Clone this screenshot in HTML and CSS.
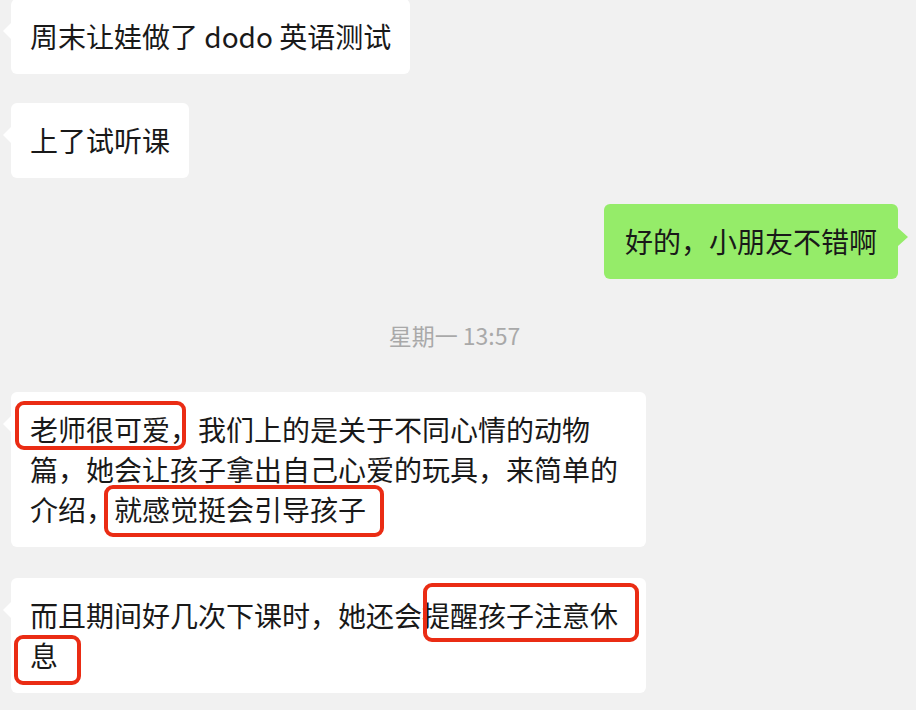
FILE: index.html
```html
<!DOCTYPE html>
<html lang="zh-CN">
<head>
    <meta charset="UTF-8">
    <meta name="viewport" content="width=device-width, initial-scale=1.0">
    <title>聊天记录</title>
    <link rel="stylesheet" href="styles.css">
</head>
<body>

<div class="chat">
    <div class="msg msg-in first">
        <div class="bubble">周末让娃做了 dodo 英语测试</div>
    </div>

    <div class="msg msg-in">
        <div class="bubble">上了试听课</div>
    </div>

    <div class="msg msg-out">
        <div class="bubble">好的，小朋友不错啊</div>
    </div>

    <div class="time">星期一 13:57</div>

    <div class="msg msg-in">
        <div class="bubble"><span class="mark mark-a">老师很可爱，</span>我们上的是关于不同心情的动物篇，她会让孩子拿出自己心爱的玩具，来简单的介绍，<span class="mark mark-b">就感觉挺会引导孩子</span></div>
    </div>

    <div class="msg msg-in last">
        <div class="bubble">而且期间好几次下课时，她还会<span class="mark mark-c">提醒孩子注意休</span><span class="mark mark-d">息</span></div>
    </div>
</div>

</body>
</html>
```

FILE: styles.css
```css
body {
    margin: 0;
    padding: 0;
    background-color: #f1f1f1;
    font-family: "Noto Sans CJK SC", "Noto Sans", sans-serif;
    color: #191919;
}

.chat {
    display: flex;
    flex-direction: column;
    padding: 0 18px 0 11px;
}

.msg {
    display: flex;
    margin-top: 29px;
}

.msg.first {
    margin-top: -1px;
}

.msg.last {
    margin-top: 31px;
}

.msg-in {
    justify-content: flex-start;
}

.msg-out {
    justify-content: flex-end;
    margin-top: 26px;
}

.bubble {
    position: relative;
    box-sizing: border-box;
    max-width: 635px;
    padding: 17px 19px 18px;
    font-size: 28px;
    line-height: 40px;
    background-color: #ffffff;
    border-radius: 6px;
}

.msg-in .bubble::before {
    content: "";
    position: absolute;
    left: -8px;
    top: 24px;
    border-top: 8px solid transparent;
    border-bottom: 8px solid transparent;
    border-right: 8px solid #ffffff;
}

.msg-out .bubble {
    padding: 17px 21px 18px;
    background-color: #95ec69;
}

.msg-out .bubble::after {
    content: "";
    position: absolute;
    right: -10px;
    top: 24px;
    border-top: 9px solid transparent;
    border-bottom: 9px solid transparent;
    border-left: 10px solid #95ec69;
}

.time {
    margin: 40px 0 12px;
    text-align: center;
    font-size: 23px;
    line-height: 32px;
    color: #a9a9a9;
}

/* red annotation boxes drawn over the text */
.mark {
    position: relative;
}

.mark::after {
    content: "";
    position: absolute;
    border: 4px solid #ea2c14;
    border-radius: 9px;
}

.mark-a::after {
    top: -8px;
    bottom: -1px;
    left: -15px;
    right: 12px;
}

.mark-b::after {
    top: -4px;
    bottom: -8px;
    left: -10px;
    right: -18px;
}

.mark-c::after {
    top: -12px;
    bottom: -7px;
    left: 1px;
    right: -21px;
}

.mark-d::after {
    top: 0;
    bottom: -10px;
    left: -16px;
    right: -23px;
}
```
